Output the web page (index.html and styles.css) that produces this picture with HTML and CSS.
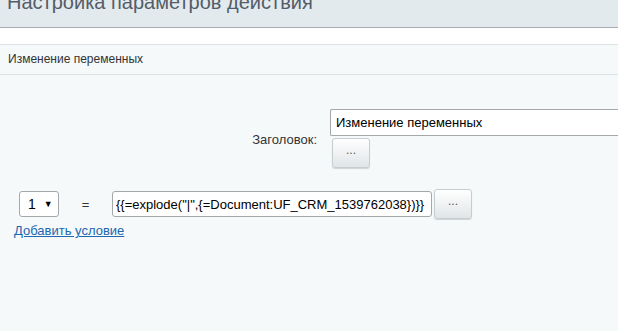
FILE: index.html
```html
<!DOCTYPE html>
<html lang="ru">

<head>
    <meta charset="UTF-8">
    <title>Настройка параметров действия</title>
    <link rel="stylesheet" href="styles.css">
</head>

<body>
    <div class="popup">
        <div class="popup-head">
            <h1 class="popup-title">Настройка параметров действия</h1>
        </div>
        <div class="popup-gap"></div>
        <div class="section-title">Изменение переменных</div>
        <div class="popup-body">
            <div class="field-row">
                <label class="field-label" for="title">Заголовок:</label>
                <div class="field-control">
                    <input type="text" id="title" class="text-input title-input" value="Изменение переменных">
                    <button type="button" class="dots-btn">...</button>
                </div>
            </div>

            <div class="cond-row">
                <div class="select-box">1 <span class="arrow">&#9660;</span></div>
                <span class="eq">=</span>
                <input type="text" class="text-input cond-input" value='{{=explode("|",{=Document:UF_CRM_1539762038})}}'>
                <button type="button" class="dots-btn">...</button>
            </div>
            <a href="#" class="add-link">Добавить условие</a>
        </div>
    </div>
</body>

</html>
```

FILE: styles.css
```css
body {
    margin: 0;
    font-family: "Liberation Sans", Arial, sans-serif;
    background-color: #f5f9fa;
    overflow: hidden;
}

.popup-head {
    height: 27px;
    background-color: #e3eaed;
    border-bottom: 1px solid #a7adb0;
    overflow: hidden;
}

.popup-title {
    margin: -8px 0 0 7px;
    font-size: 20px;
    line-height: 20px;
    font-weight: normal;
    color: #535c69;
}

.popup-gap {
    height: 16px;
    background-color: #ffffff;
    border-bottom: 1px solid #dde3e5;
}

.section-title {
    height: 29px;
    line-height: 28px;
    padding-left: 8px;
    font-size: 12px;
    color: #333;
    background-color: #f5f9fa;
    border-bottom: 1px solid #dde3e5;
}

.popup-body {
    padding-top: 34px;
}

.field-row {
    display: flex;
    align-items: flex-start;
}

.field-label {
    flex-shrink: 0;
    width: 317px;
    padding-top: 23px;
    text-align: right;
    font-size: 13px;
    color: #333;
}

.field-control {
    margin-left: 13px;
    flex: 1;
}

.text-input {
    box-sizing: border-box;
    height: 27px;
    padding: 0 5px;
    font-family: inherit;
    font-size: 13px;
    color: #000;
    background: #fff;
    border: 1px solid #a3a8ab;
    border-radius: 2px;
    outline: none;
}

.title-input {
    display: block;
    width: 300px;
    border-right: none;
    border-radius: 2px 0 0 2px;
}

.dots-btn {
    display: block;
    width: 38px;
    height: 30px;
    padding: 0 0 6px;
    margin: 2px 0 0 2px;
    font-family: inherit;
    font-size: 12px;
    color: #555;
    background: linear-gradient(#ffffff, #e1e5e7);
    border: 1px solid #c6cdd0;
    border-radius: 3px;
    box-shadow: 0 1px 1px rgba(0, 0, 0, 0.15);
}

.cond-row {
    display: flex;
    align-items: center;
    margin-top: 21px;
    padding-left: 19px;
}

.select-box {
    box-sizing: border-box;
    width: 40px;
    height: 26px;
    line-height: 24px;
    padding-left: 8px;
    font-size: 14px;
    color: #000;
    background: #fff;
    border: 1px solid #a3a8ab;
    border-radius: 3px;
}

.arrow {
    font-size: 9px;
    margin-left: 4px;
    vertical-align: 2px;
}

.eq {
    width: 53px;
    text-align: center;
    font-size: 13px;
    color: #333;
}

.cond-input {
    width: 320px;
    height: 26px;
    padding: 0 3px;
    font-size: 13px;
    border-radius: 3px;
}

.cond-row .dots-btn {
    margin: 0 0 0 2px;
}

.add-link {
    display: inline-block;
    margin: 4px 0 0 14px;
    font-size: 13px;
    color: #2067b0;
    text-decoration: underline;
}
```
